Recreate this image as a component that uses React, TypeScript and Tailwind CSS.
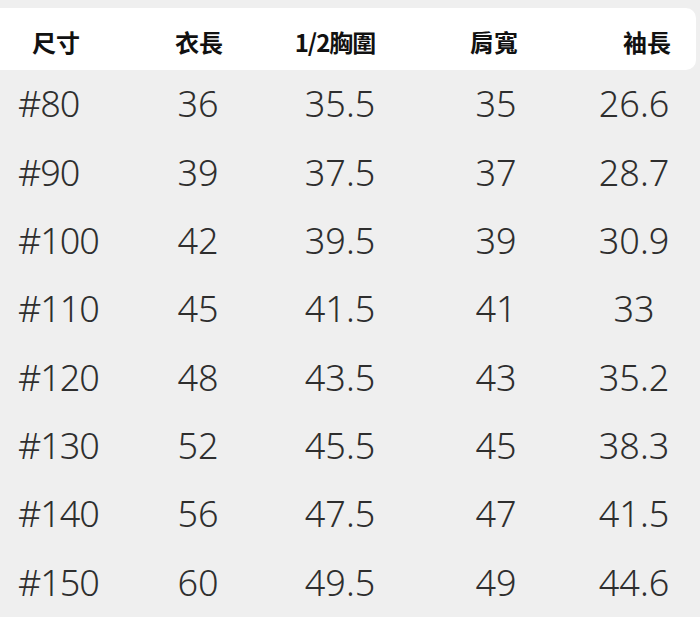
const headers = ["尺寸", "衣長", "1/2胸圍", "肩寬", "袖長"];

const rows = [
  ["#80", "36", "35.5", "35", "26.6"],
  ["#90", "39", "37.5", "37", "28.7"],
  ["#100", "42", "39.5", "39", "30.9"],
  ["#110", "45", "41.5", "41", "33"],
  ["#120", "48", "43.5", "43", "35.2"],
  ["#130", "52", "45.5", "45", "38.3"],
  ["#140", "56", "47.5", "47", "41.5"],
  ["#150", "60", "49.5", "49", "44.6"],
];

export default function App() {
  return (
    <div className="w-[700px] h-[624px] bg-[#efefef] flex flex-col overflow-hidden">
      <div className="h-[8px]" />
      {/* header strip */}
      <div
        className="h-[62px] w-[696px] pt-[5px] bg-white rounded-r-[10px] grid grid-cols-[112px_174px_98px_220px_86px] items-center text-[24px] font-bold text-[#111]"
        style={{ fontFamily: '"Noto Sans CJK TC", "Noto Sans CJK SC", sans-serif' }}
      >
        {headers.map((h, i) => (
          <div key={i} className={`text-center ${i === 2 ? "tracking-[-1px]" : ""}`}>
            {h}
          </div>
        ))}
      </div>
      {/* body */}
      <div
        className="h-[547px] flex flex-col text-[36px] text-[#2e2e2e] font-light"
        style={{ fontFamily: '"Noto Sans", "Open Sans", sans-serif' }}
      >
        {rows.map((r, ri) => (
          <div key={ri} className="flex-1 grid grid-cols-[120px_156px_128px_184px_92px] items-center leading-none">
            {r.map((c, ci) => (
              <div key={ci} className={ci === 0 ? "pl-[18px] tracking-[-1px]" : "text-center"}>
                {c}
              </div>
            ))}
          </div>
        ))}
      </div>
      <div className="flex-1 bg-white" />
    </div>
  );
}
